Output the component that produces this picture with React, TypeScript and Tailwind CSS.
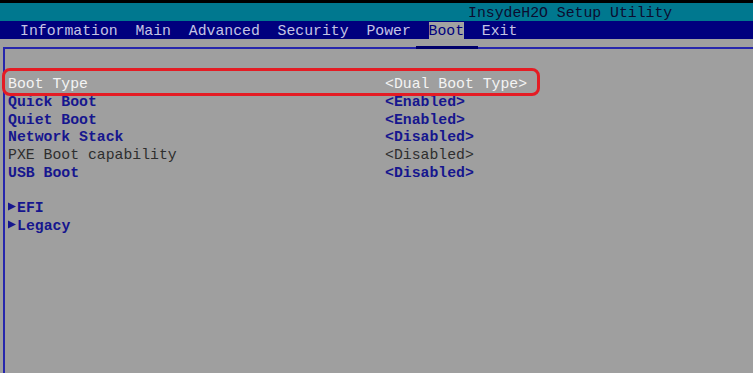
import React from 'react';

type Item = {
  label: string;
  value?: string;
  tone: 'selected' | 'active' | 'disabled';
  submenu?: boolean;
};

const items: (Item | null)[] = [
  { label: 'Boot Type', value: '<Dual Boot Type>', tone: 'selected' },
  { label: 'Quick Boot', value: '<Enabled>', tone: 'active' },
  { label: 'Quiet Boot', value: '<Enabled>', tone: 'active' },
  { label: 'Network Stack', value: '<Disabled>', tone: 'active' },
  { label: 'PXE Boot capability', value: '<Disabled>', tone: 'disabled' },
  { label: 'USB Boot', value: '<Disabled>', tone: 'active' },
  null,
  { label: 'EFI', tone: 'active', submenu: true },
  { label: 'Legacy', tone: 'active', submenu: true },
];

const toneClass = (tone: Item['tone']) => {
  switch (tone) {
    case 'selected': return 'text-[#f4f4f4]';
    case 'disabled': return 'text-[#2e2e2e]';
    default: return 'text-[#16168e] font-bold';
  }
};

const Arrow: React.FC = () => (
  <svg width="9" height="9" viewBox="0 0 9 9" className="inline-block -mt-[3px] align-middle">
    <path d="M0 0.5 L8 4.5 L0 8.5 Z" fill="#16168e" />
  </svg>
);

const tabs = ['Information', 'Main', 'Advanced', 'Security', 'Power', 'Boot', 'Exit'];

const App: React.FC = () => {
  return (
    <div
      className="relative w-[753px] h-[373px] overflow-hidden bg-[#9f9f9f] text-[14.8px] whitespace-pre"
      style={{ fontFamily: '"Liberation Mono", "DejaVu Sans Mono", monospace' }}
    >
      <div className="h-[3px] bg-black" />
      <div className="h-[18px] bg-[#00788f] pl-[468px] pt-[1px] leading-[18px] text-[#0c0c30]">
        InsydeH2O Setup Utility
      </div>
      <div className="h-[18px] bg-[#00007e] pl-[20px] pt-[1px] leading-[18px] flex text-[#c4c4e4]">
        {tabs.map((t, i) => (
          <React.Fragment key={t}>
            {i > 0 && <span>{'  '}</span>}
            <span className={t === 'Boot' ? 'bg-[#a2a2a2] text-[#00007e]' : ''}>{t}</span>
          </React.Fragment>
        ))}
      </div>
      <div className="h-[8px]" />
      <div className="ml-[3px] h-[326px] border-l-2 border-t-2 border-[#2626ac] pl-[3px] pt-[27px] leading-[17.75px]">
        {items.map((item, i) =>
          item ? (
            <div key={item.label} className={`flex h-[17.75px] ${toneClass(item.tone)}`}>
              <span className="w-[377px]">
                {item.submenu && <Arrow />}
                {item.label}
              </span>
              {item.value && <span>{item.value}</span>}
            </div>
          ) : (
            <div key={i} className="h-[17.75px]" />
          )
        )}
      </div>
      <div className="absolute left-[416px] top-[46px] w-[62px] h-[3px] bg-[#00006a]" />
      <div className="absolute left-[2px] top-[68px] w-[538px] h-[28px] rounded-[8px] border-[3px] border-[#e41c24]" />
    </div>
  );
};

export default App;
